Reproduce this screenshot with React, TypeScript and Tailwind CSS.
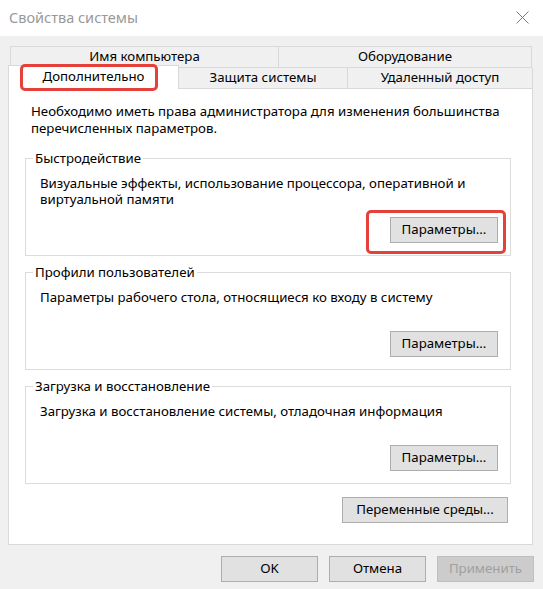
import React from "react"

function WinButton({
  children,
  className = "",
  disabled = false,
}: {
  children: React.ReactNode
  className?: string
  disabled?: boolean
}) {
  return (
    <button
      disabled={disabled}
      className={
        "flex h-[26px] items-center justify-center border text-[13.25px] leading-none " +
        (disabled
          ? "border-[#bfbfbf] bg-[#cccccc] text-[#a0a0a0] "
          : "border-[#adadad] bg-[#e1e1e1] text-black ") +
        className
      }
    >
      {children}
    </button>
  )
}

function Group({
  title,
  text,
  highlight = false,
}: {
  title: string
  text: string
  highlight?: boolean
}) {
  return (
    <fieldset className="ml-[16px] w-[486px] border border-[#dcdcdc]">
      <legend className="ml-[7px] px-[2px] text-[13.25px] leading-[17px]">{title}</legend>
      <div className="flex h-[88px] flex-col justify-between pb-[12px] pl-[14px] pr-[12px] pt-[8px]">
        <p className="text-[13.25px] leading-[16px]">{text}</p>
        <div className="relative self-end">
          {highlight && (
            <div className="pointer-events-none absolute -left-[24px] -right-[8px] -top-[7px] -bottom-[11px] rounded-[5px] border-[3px] border-[#e5413a]" />
          )}
          <WinButton className="w-[108px]">Параметры...</WinButton>
        </div>
      </div>
    </fieldset>
  )
}

export default function App() {
  return (
    <div className="flex h-[589px] w-[543px] flex-col overflow-hidden bg-[#f0f0f0] font-['Noto_Sans',sans-serif] text-black">
      {/* title bar */}
      <div className="flex h-[36px] items-center justify-between bg-white pl-[9px] pr-[14px]">
        <span className="text-[14.5px] text-[#999999]">Свойства системы</span>
        <svg width="13" height="13" viewBox="0 0 13 13" className="mt-[-1px]">
          <path d="M0.5 0.5 L12.5 12.5 M12.5 0.5 L0.5 12.5" stroke="#7a7a7a" strokeWidth="1" fill="none" />
        </svg>
      </div>

      {/* tabs */}
      <div className="mt-[10px] text-[13.25px]">
        <div className="ml-[10px] mr-[11px] flex h-[22px]">
          <div className="flex w-[269px] items-center justify-center border border-[#d9d9d9]">Имя компьютера</div>
          <div className="flex flex-1 items-center justify-center border border-l-0 border-[#d9d9d9]">Оборудование</div>
        </div>
        <div className="relative z-10 ml-[8px] mr-[10px] flex h-[20px]">
          <div className="relative -mb-px -mt-[3px] flex w-[171px] items-center justify-center border border-b-0 border-[#d9d9d9] bg-white">
            <span className="-mt-[1px]">Дополнительно</span>
            <div className="pointer-events-none absolute left-[11px] top-[-2px] h-[27px] w-[138px] rounded-[5px] border-[3px] border-[#e5413a]" />
          </div>
          <div className="flex w-[169px] items-center justify-center border-r border-[#d9d9d9]">Защита системы</div>
          <div className="flex flex-1 items-center justify-center border-r border-[#d9d9d9]">Удаленный доступ</div>
        </div>
      </div>

      {/* page */}
      <div className="mx-[8px] mr-[10px] flex h-[457px] flex-col border border-[#d9d9d9] bg-white">
        <p className="pl-[22px] pr-[20px] pt-[14px] text-[13.25px] leading-[17px]">
          Необходимо иметь права администратора для изменения большинства перечисленных параметров.
        </p>
        <div className="mt-[13px] flex flex-col gap-[8px]">
          <Group
            title="Быстродействие"
            text="Визуальные эффекты, использование процессора, оперативной и виртуальной памяти"
            highlight
          />
          <Group title="Профили пользователей" text="Параметры рабочего стола, относящиеся ко входу в систему" />
          <Group
            title="Загрузка и восстановление"
            text="Загрузка и восстановление системы, отладочная информация"
          />
        </div>
        <div className="mr-[24px] mt-[13px] flex justify-end">
          <WinButton className="w-[166px]">Переменные среды...</WinButton>
        </div>
      </div>

      {/* dialog buttons */}
      <div className="mt-[11px] flex justify-end gap-[11px] pr-[9px]">
        <WinButton className="w-[97px]">OK</WinButton>
        <WinButton className="w-[97px]">Отмена</WinButton>
        <WinButton className="w-[97px]" disabled>
          Применить
        </WinButton>
      </div>
    </div>
  )
}
